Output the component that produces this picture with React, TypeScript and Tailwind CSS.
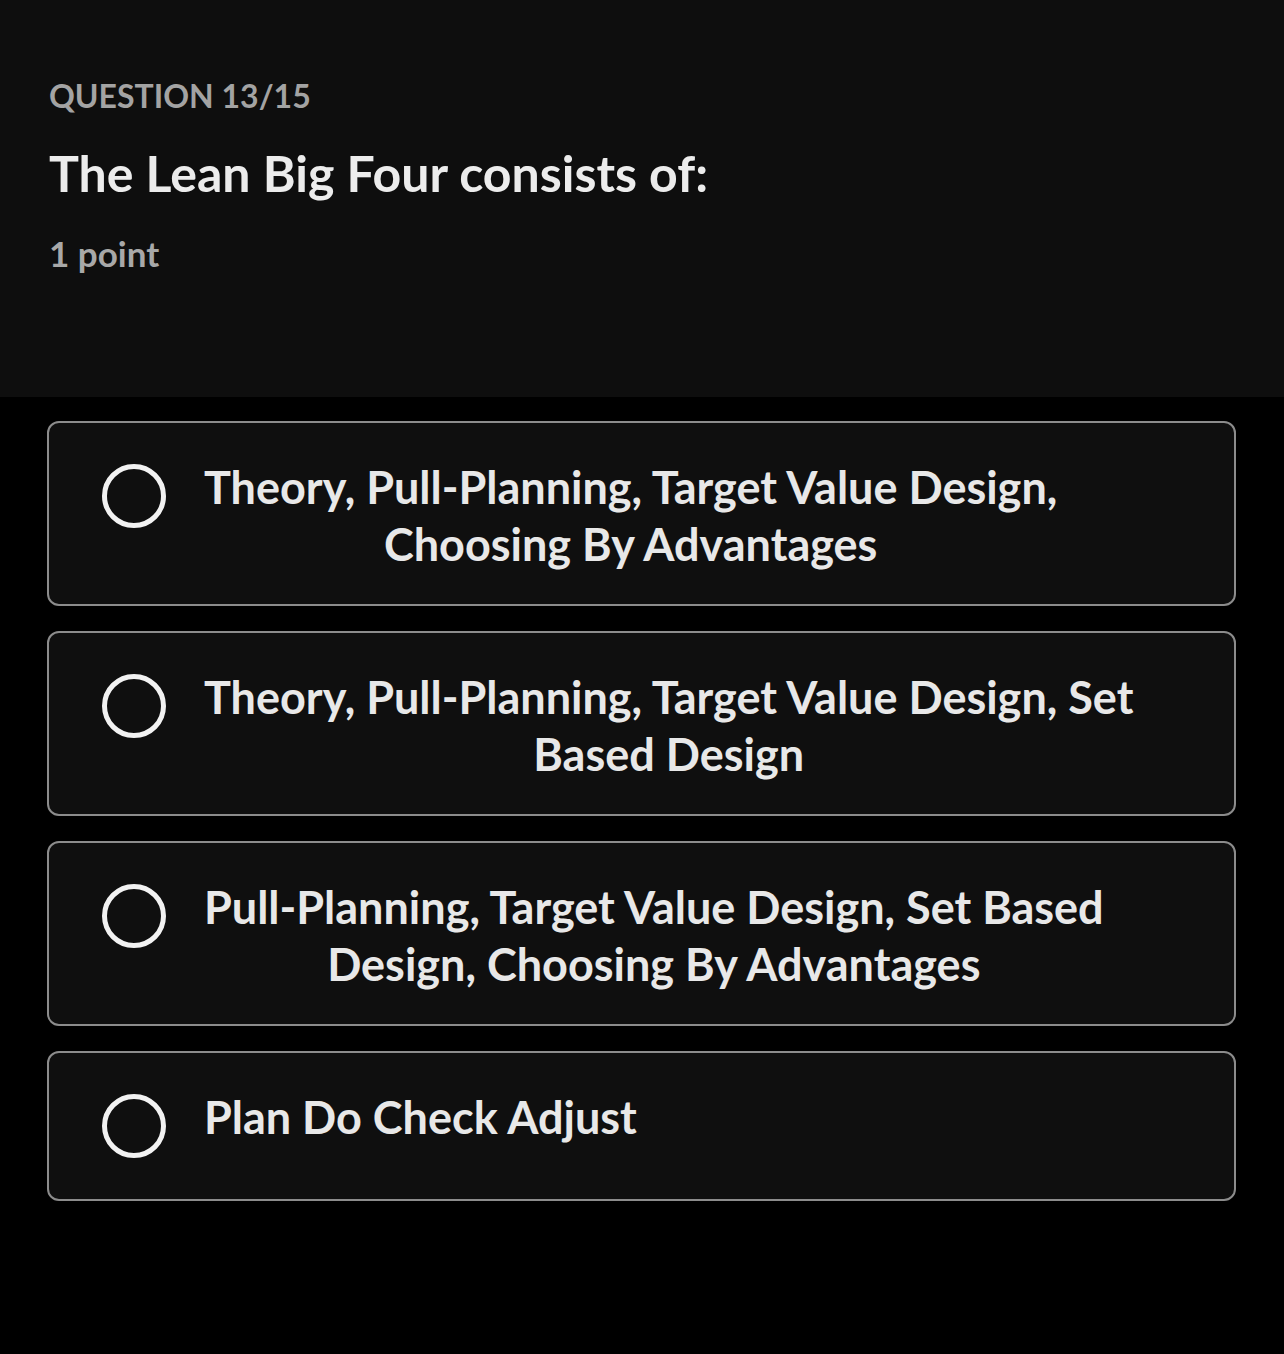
const options = [
  ["Theory, Pull-Planning, Target Value Design,", "Choosing By Advantages"],
  ["Theory, Pull-Planning, Target Value Design, Set", "Based Design"],
  ["Pull-Planning, Target Value Design, Set Based", "Design, Choosing By Advantages"],
  ["Plan Do Check Adjust"],
];

const App = () => {
  return (
    <div className="min-h-[1354px] bg-black font-['Lato','Noto_Sans',sans-serif]">
      <header className="h-[397px] bg-[#0e0e0e] px-[49px] pt-[76px]">
        <p className="text-[32px] leading-[40px] font-bold text-[#a3a3a3]">
          QUESTION 13/15
        </p>
        <h1 className="mt-[28px] text-[50px] leading-[58px] font-bold text-[#ececec]">
          The Lean Big Four consists of:
        </h1>
        <p className="mt-[31px] text-[35px] leading-[40px] font-bold text-[#a8a8a8]">
          1 point
        </p>
      </header>

      <main className="flex flex-col gap-[25px] pl-[47px] pr-[48px] pt-[24px]">
        {options.map((lines, i) => (
          <div
            key={i}
            className="flex items-start rounded-[12px] border-2 border-[#8c8c8c] bg-[#0f0f0f] pl-[53px] pr-[40px] pt-[41px] pb-[31px]"
          >
            <span className="mb-[10px] h-[64px] w-[64px] shrink-0 rounded-full border-[5px] border-[#f2f2f2]" />
            <p className="-mt-[5px] ml-[38px] w-fit whitespace-nowrap text-center text-[45px] leading-[57px] font-bold text-[#e8e8e8]">
              {lines.map((l, j) => (
                <span key={j} className="block">
                  {l}
                </span>
              ))}
            </p>
          </div>
        ))}
      </main>
    </div>
  );
};

export default App;
